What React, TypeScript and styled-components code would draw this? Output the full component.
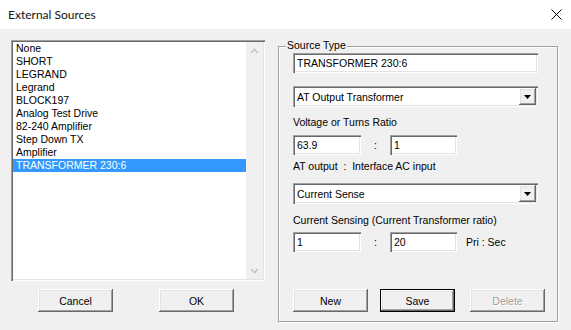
import React from "react";
import styled, { createGlobalStyle, css } from "styled-components";

const GlobalStyle = createGlobalStyle`
  html, body { margin: 0; padding: 0; background: #f0f0f0; }
  body {
    font-family: "Liberation Sans", Arial, sans-serif;
    font-size: 10.5px;
    color: #000;
  }
  * { box-sizing: border-box; }
`;

const sunken = css`
  background: #fff;
  box-shadow: inset 1px 1px 0 #a0a0a0, inset 2px 2px 0 #696969,
    inset -1px -1px 0 #ffffff, inset -2px -2px 0 #e3e3e3;
`;

const raised = css`
  background: #f0f0f0;
  box-shadow: inset -1px -1px 0 #696969, inset 1px 1px 0 #ffffff,
    inset -2px -2px 0 #a0a0a0, inset 2px 2px 0 #e3e3e3;
`;

const Window = styled.div`
  width: 571px;
  height: 330px;
  background: #f0f0f0;
  display: flex;
  flex-direction: column;
  overflow: hidden;
`;

const TitleBar = styled.div`
  height: 29px;
  flex: none;
  background: #fff;
  display: flex;
  align-items: center;
  justify-content: space-between;
  padding: 0 9px 1px 8px;
`;

const TitleText = styled.span`
  font-family: Lato, "Liberation Sans", sans-serif;
  font-size: 12px;
  color: #111;
`;

const Body = styled.div`
  display: flex;
  padding: 11px 0 0 11px;
  gap: 13px;
`;

const LeftColumn = styled.div`
  width: 254px;
  display: flex;
  flex-direction: column;
  gap: 8px;
`;

const ListBox = styled.div`
  ${sunken};
  width: 254px;
  height: 241px;
  padding: 2px;
  display: flex;
`;

const ListItems = styled.div`
  flex: 1;
  display: flex;
  flex-direction: column;
`;

const ListItem = styled.div<{ $selected?: boolean }>`
  height: 13px;
  line-height: 13px;
  padding-left: 3px;
  white-space: nowrap;
  background: ${(p) => (p.$selected ? "#3399ff" : "transparent")};
  color: ${(p) => (p.$selected ? "#fff" : "#000")};
`;

const ScrollBar = styled.div`
  width: 17px;
  background: #f0f0f0;
  display: flex;
  flex-direction: column;
  justify-content: space-between;
`;

const ScrollArrow = styled.div`
  height: 17px;
  display: flex;
  align-items: center;
  justify-content: center;
`;

const ButtonRow = styled.div<{ $pl: number; $gap: number }>`
  display: flex;
  padding-left: ${(p) => p.$pl}px;
  gap: ${(p) => p.$gap}px;
`;

const Button = styled.div<{ $default?: boolean; $disabled?: boolean; $ml?: number }>`
  ${raised};
  width: 75px;
  height: 23px;
  margin-left: ${(p) => p.$ml ?? 0}px;
  display: flex;
  align-items: center;
  justify-content: center;
  color: ${(p) => (p.$disabled ? "#a0a0a0" : "#000")};
  text-shadow: ${(p) => (p.$disabled ? "1px 1px 0 #fff" : "none")};
  ${(p) =>
    p.$default &&
    css`
      box-shadow: inset 0 0 0 1px #000, inset -2px -2px 0 #696969,
        inset 2px 2px 0 #ffffff, inset -3px -3px 0 #a0a0a0,
        inset 3px 3px 0 #e3e3e3;
    `}
`;

const GroupBox = styled.div`
  position: relative;
  margin-top: 6px;
  width: 280px;
  height: 276px;
  border: 1px solid #a0a0a0;
  box-shadow: inset 1px 1px 0 #fff, 1px 1px 0 #fff;
  padding: 6px 0 0 14px;
  display: flex;
  flex-direction: column;
`;

const Legend = styled.span`
  position: absolute;
  top: -8px;
  left: 7px;
  padding: 0 1px;
  background: #f0f0f0;
  line-height: 13px;
`;

const Spaced = styled.div<{ $mt: number }>`
  margin-top: ${(p) => p.$mt}px;
`;

const TextField = styled.div<{ $w: number }>`
  ${sunken};
  width: ${(p) => p.$w}px;
  height: 20px;
  padding: 0 4px;
  display: flex;
  align-items: center;
  white-space: nowrap;
`;

const Combo = styled.div`
  ${sunken};
  width: 245px;
  height: 21px;
  padding: 2px;
  display: flex;
  align-items: center;
`;

const ComboText = styled.span`
  flex: 1;
  padding-left: 2px;
`;

const ComboButton = styled.div`
  ${raised};
  width: 17px;
  height: 17px;
  display: flex;
  align-items: center;
  justify-content: center;
`;

const Label = styled.div`
  height: 13px;
  line-height: 13px;
  white-space: nowrap;
`;

const RatioRow = styled.div`
  display: flex;
  align-items: center;
`;

const Colon = styled.span`
  width: 29px;
  text-align: center;
`;

const RowNote = styled.span`
  margin-left: 9px;
`;

const items = [
  "None",
  "SHORT",
  "LEGRAND",
  "Legrand",
  "BLOCK197",
  "Analog Test Drive",
  "82-240 Amplifier",
  "Step Down TX",
  "Amplifier",
  "TRANSFORMER 230:6",
];

const Chevron = ({ up }: { up?: boolean }) => (
  <svg width="9" height="6" viewBox="0 0 9 6">
    <polyline
      points={up ? "1,5 4.5,1.5 8,5" : "1,1 4.5,4.5 8,1"}
      fill="none"
      stroke="#c4c4c4"
      strokeWidth="1.6"
    />
  </svg>
);

const DownTriangle = () => (
  <svg width="7" height="4" viewBox="0 0 7 4">
    <polygon points="0,0 7,0 3.5,4" fill="#000" />
  </svg>
);

const CloseIcon = () => (
  <svg width="11" height="11" viewBox="0 0 11 11">
    <line x1="0.5" y1="0.5" x2="10.5" y2="10.5" stroke="#000" strokeWidth="1" />
    <line x1="10.5" y1="0.5" x2="0.5" y2="10.5" stroke="#000" strokeWidth="1" />
  </svg>
);

export default function App() {
  return (
    <>
      <GlobalStyle />
      <Window>
        <TitleBar>
          <TitleText>External Sources</TitleText>
          <CloseIcon />
        </TitleBar>
        <Body>
          <LeftColumn>
            <ListBox>
              <ListItems>
                {items.map((it, i) => (
                  <ListItem key={it} $selected={i === items.length - 1}>
                    {it}
                  </ListItem>
                ))}
              </ListItems>
              <ScrollBar>
                <ScrollArrow>
                  <Chevron up />
                </ScrollArrow>
                <ScrollArrow>
                  <Chevron />
                </ScrollArrow>
              </ScrollBar>
            </ListBox>
            <ButtonRow $pl={27} $gap={46}>
              <Button>Cancel</Button>
              <Button>OK</Button>
            </ButtonRow>
          </LeftColumn>
          <GroupBox>
            <Legend>Source Type</Legend>
            <TextField $w={245}>TRANSFORMER 230:6</TextField>
            <Spaced $mt={13}>
              <Combo>
                <ComboText>AT Output Transformer</ComboText>
                <ComboButton>
                  <DownTriangle />
                </ComboButton>
              </Combo>
            </Spaced>
            <Spaced $mt={9}>
              <Label>Voltage or Turns Ratio</Label>
            </Spaced>
            <Spaced $mt={6}>
              <RatioRow>
                <TextField $w={68}>63.9</TextField>
                <Colon>:</Colon>
                <TextField $w={67}>1</TextField>
              </RatioRow>
            </Spaced>
            <Spaced $mt={5}>
              <Label>AT output&nbsp; :&nbsp; Interface AC input</Label>
            </Spaced>
            <Spaced $mt={10}>
              <Combo>
                <ComboText>Current Sense</ComboText>
                <ComboButton>
                  <DownTriangle />
                </ComboButton>
              </Combo>
            </Spaced>
            <Spaced $mt={10}>
              <Label>Current Sensing (Current Transformer ratio)</Label>
            </Spaced>
            <Spaced $mt={5}>
              <RatioRow>
                <TextField $w={68}>1</TextField>
                <Colon>:</Colon>
                <TextField $w={67}>20</TextField>
                <RowNote>Pri : Sec</RowNote>
              </RatioRow>
            </Spaced>
            <Spaced $mt={37}>
              <ButtonRow $pl={0} $gap={12}>
                <Button>New</Button>
                <Button $default>Save</Button>
                <Button $disabled $ml={3}>Delete</Button>
              </ButtonRow>
            </Spaced>
          </GroupBox>
        </Body>
      </Window>
    </>
  );
}
